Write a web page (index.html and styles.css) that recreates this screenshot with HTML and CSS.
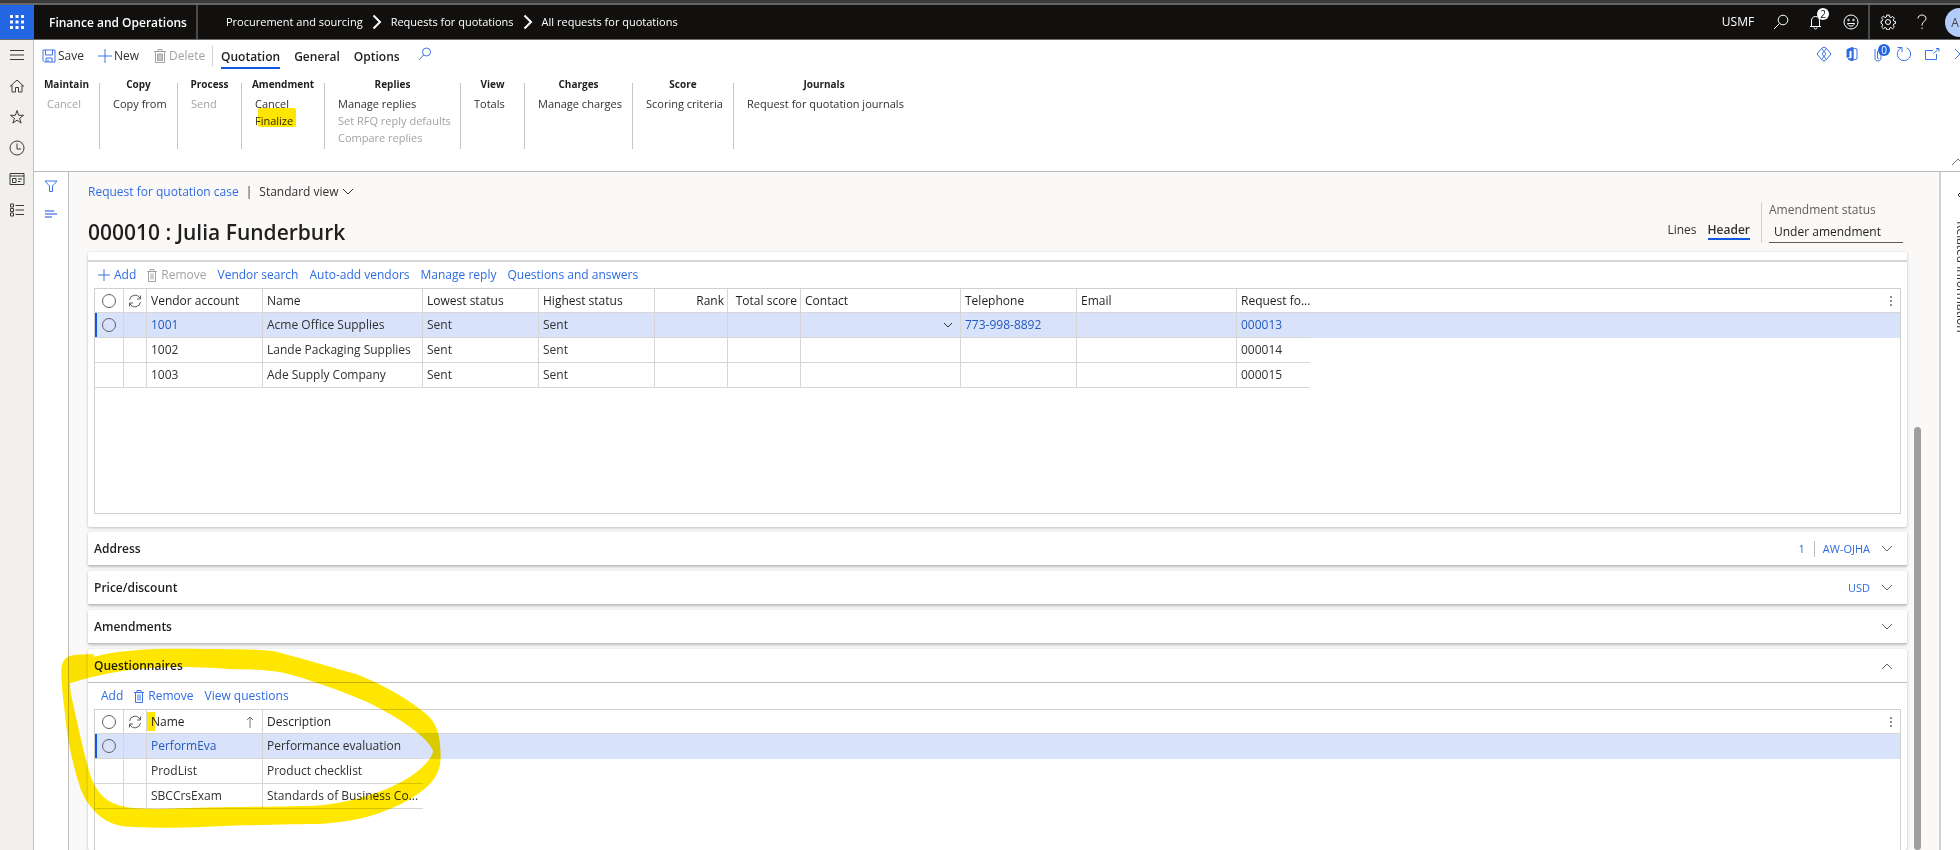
FILE: index.html
```
<!DOCTYPE html>
<html lang="en">
<head>
    <meta charset="utf-8">
    <title>Finance and Operations</title>
    <link rel="stylesheet" href="styles.css">
</head>
<body>
    <header class="topbar">
        <button class="launcher" aria-label="App launcher">
            <svg width="16" height="16" viewBox="0 0 16 16"><path d="M1 1h3v3H1zM6.500 1h3v3h-3zM12 1h3v3h-3zM1 6.500h3v3H1zM6.500 6.500h3v3h-3zM12 6.500h3v3h-3zM1 12h3v3H1zM6.500 12h3v3h-3zM12 12h3v3h-3z"/></svg>
        </button>
        <div class="app-name">Finance and Operations</div>
        <nav class="crumbs">
            <a href="#">Procurement and sourcing</a>
            <svg width="10" height="16" viewBox="0 0 10 16"><path d="M1.500 1.500L8 8l-6.500 6.500"/></svg>
            <a href="#">Requests for quotations</a>
            <svg width="10" height="16" viewBox="0 0 10 16"><path d="M1.500 1.500L8 8l-6.500 6.500"/></svg>
            <a href="#">All requests for quotations</a>
        </nav>
        <div class="top-tools">
            <button class="company">USMF</button>
            <button aria-label="Search"><svg width="16" height="16" viewBox="0 0 16 16"><circle cx="10" cy="6" r="4.800"/><path d="M6.500 9.500L1 15"/></svg></button>
            <button class="bell" aria-label="Notifications"><svg width="16" height="16" viewBox="0 0 16 16"><path d="M2 12.500h11M3.500 12.500V7c0-3 1.500-4.500 4-4.500s4 1.500 4 4.500v5.500M6 13.500c0 2 3 2 3 0"/></svg><span class="count">2</span></button>
            <button aria-label="Feedback"><svg width="16" height="16" viewBox="0 0 16 16"><circle cx="8" cy="8" r="7"/><path d="M4.500 9.500c1 3.500 6 3.500 7 0z"/><circle cx="5.500" cy="6" r=".8"/><circle cx="10.500" cy="6" r=".8"/></svg></button>
            <button class="gear" aria-label="Settings"><svg width="16" height="16" viewBox="0 0 16 16"><circle cx="8" cy="8" r="2.500"/><path d="M6.800 1h2.400l.4 2 1.400.6 1.700-1.200 1.700 1.700-1.200 1.700.6 1.400 1.700.3v2l-1.700.4-.6 1.400 1.200 1.700-1.700 1.700-1.700-1.200-1.400.6-.4 1.700H6.800l-.4-1.700-1.400-.6-1.700 1.200-1.700-1.700 1.200-1.700-.6-1.400L1 9.200v-2l1.200-.3.6-1.400-1.200-1.700 1.700-1.700L5 3.600 6.400 3z"/></svg></button>
            <button class="help" aria-label="Help"><svg width="10" height="16" viewBox="0 0 10 16"><path d="M1 4.500C1 2.500 2.700 1 5 1s4 1.500 4 3.500C9 7.500 5 7.500 5 11v.5"/><path d="M5 13.500V15"/></svg></button>
            <button class="avatar">AD</button>
        </div>
    </header>

    <div class="shell">
        <nav class="rail">
            <a href="#" aria-label="Expand"><svg width="16" height="16" viewBox="0 0 16 16"><path d="M1 3.500h14M1 8h14M1 12.500h14"/></svg></a>
            <a href="#" aria-label="Home"><svg width="16" height="16" viewBox="0 0 16 16"><path d="M1 8.500L8 2l7 6.500M3 7v7h3.500V9.500h3V14H13V7"/></svg></a>
            <a href="#" aria-label="Favorites"><svg width="16" height="16" viewBox="0 0 16 16"><path d="M8 1.500l1.600 4.800h5L10.600 9.300l1.500 4.800L8 11.200l-4.100 2.900 1.500-4.800-4-3h5z"/></svg></a>
            <a href="#" aria-label="Recent"><svg width="16" height="16" viewBox="0 0 16 16"><circle cx="8" cy="8" r="7"/><path d="M8 3.500V9h4"/></svg></a>
            <a href="#" aria-label="Workspaces"><svg width="16" height="16" viewBox="0 0 16 16"><path d="M1 2.500h14v11H1zM1 5h14M3.500 7.500h3.500v4H3.500zM9 8h4M9 10.500h2.500"/></svg></a>
            <a href="#" aria-label="Modules"><svg width="16" height="16" viewBox="0 0 16 16"><path d="M1.500 2h3v3h-3zM1.500 6.500h3v3h-3zM1.500 11h3v3h-3zM6.500 3.500H15M6.500 8H15M6.500 12.500H15"/></svg></a>
        </nav>

        <div class="page">
            <section class="ribbon">
                <div class="tabs">
                    <button class="cmd save"><svg class="blue" width="14" height="14" viewBox="0 0 14 14"><path d="M1 1h12v12H2.500L1 11.500zM3.500 1v5h7V1M4 13V9h6v4M6 10.500V13"/></svg>Save</button>
                    <button class="cmd new"><svg class="blue" width="14" height="14" viewBox="0 0 14 14"><path d="M7 0v14M0 7h14"/></svg>New</button>
                    <button class="cmd delete" disabled><svg width="12" height="14" viewBox="0 0 12 14"><path d="M0 2.500h12M4 2V.5h4V2M1.500 2.500v11h9v-11"/><path d="M3.500 5h5v6.500h-5z" fill="#c8c6c4"/></svg>Delete</button>
                    <button class="tab active">Quotation</button>
                    <button class="tab">General</button>
                    <button class="tab">Options</button>
                    <button class="find" aria-label="Find action"><svg class="blue" width="14" height="14" viewBox="0 0 14 14"><circle cx="8.500" cy="5" r="4"/><path d="M5.500 8L1 13"/></svg></button>
                    <div class="page-tools">
                        <button aria-label="Power Apps"><svg class="blue" width="16" height="16" viewBox="0 0 16 16"><path d="M5.500 2.500L1 8l4.500 5.500L10 8zM10.500 2.500L6 8l4.500 5.500L15 8zM5.500 2.500L8 1l2.500 1.500M5.500 13.500L8 15l2.500-1.500"/></svg></button>
                        <button aria-label="Open in Office"><svg class="blue" width="14" height="16" viewBox="0 0 14 16"><path d="M8 2l4 1v10l-4 1z"/><path d="M7 1.500L2 3.500v8l2-.5V5l3-1v8.500l-4 .5 4 2 1-1V2z" fill="#2266e3"/></svg></button>
                        <button class="clip" aria-label="Attachments"><svg class="blue" width="14" height="16" viewBox="0 0 14 16"><path d="M2 3v9c0 4 6 4 6 0V4M4.500 5v7c0 1 1.500 1 1.500 0"/></svg><span class="count">0</span></button>
                        <button aria-label="Refresh"><svg class="blue" width="16" height="16" viewBox="0 0 16 16"><path d="M10.500 1.800a6.700 6.700 0 1 1-5.500.2M1.500 1.500H6V6"/></svg></button>
                        <button aria-label="Open in new window"><svg class="blue" width="16" height="14" viewBox="0 0 16 14"><path d="M9 3.500H1.500v9h11V7M9.500 6.500L15 1.500M12 1.500h3v3"/></svg></button>
                        <button aria-label="Close"><svg class="blue" width="12" height="12" viewBox="0 0 12 12"><path d="M1 1l10 10M11 1L1 11"/></svg></button>
                    </div>
                </div>
                <div class="groups">
                    <div class="group"><h4>Maintain</h4><div class="items"><button disabled>Cancel</button></div></div>
                    <div class="group"><h4>Copy</h4><div class="items"><button>Copy from</button></div></div>
                    <div class="group"><h4>Process</h4><div class="items"><button disabled>Send</button></div></div>
                    <div class="group"><h4>Amendment</h4><div class="items"><button>Cancel</button><button class="finalize">Finalize</button></div></div>
                    <div class="group"><h4>Replies</h4><div class="items"><button>Manage replies</button><button disabled>Set RFQ reply defaults</button><button disabled>Compare replies</button></div></div>
                    <div class="group"><h4>View</h4><div class="items"><button>Totals</button></div></div>
                    <div class="group"><h4>Charges</h4><div class="items"><button>Manage charges</button></div></div>
                    <div class="group"><h4>Score</h4><div class="items"><button>Scoring criteria</button></div></div>
                    <div class="group"><h4>Journals</h4><div class="items"><button>Request for quotation journals</button></div></div>
                </div>
                <button class="collapse" aria-label="Collapse ribbon"><svg width="14" height="8" viewBox="0 0 14 8"><path d="M1 7l6-6 6 6"/></svg></button>
            </section>

            <div class="work">
                <aside class="filters">
                    <button aria-label="Filter"><svg class="blue" width="14" height="12" viewBox="0 0 14 12"><path d="M1 1h12L8.500 6v5.500h-3V6z"/></svg></button>
                    <button aria-label="Related list"><svg width="12" height="8" viewBox="0 0 12 8"><path d="M0 1h9M0 4h12M0 7h7" stroke="#8ba5ee" stroke-width="2"/></svg></button>
                </aside>

                <main class="content">
                    <div class="view-line">
                        <a href="#">Request for quotation case</a>
                        <span>|</span>
                        <button>Standard view<svg width="12" height="8" viewBox="0 0 12 8"><path d="M1 1l5 5 5-5"/></svg></button>
                    </div>
                    <div class="title-line">
                        <h1>000010 : Julia Funderburk</h1>
                        <div class="modes">
                            <button>Lines</button>
                            <button class="active">Header</button>
                        </div>
                        <div class="status">
                            <label for="status">Amendment status</label>
                            <input id="status" type="text" value="Under amendment" readonly>
                        </div>
                    </div>

                    <div class="scroller">
                        <div class="cards">
                            <section class="card vendors">
                                <div class="card-body">
                                    <div class="toolbar">
                                        <button><svg class="blue" width="12" height="12" viewBox="0 0 12 12"><path d="M6 0v12M0 6h12"/></svg>Add</button>
                                        <button disabled><svg width="10" height="13" viewBox="0 0 10 13"><path d="M0 2.500h10M3 2V.5h4V2M1.500 2.500v10h7v-10M4 4.500v6M6 4.500v6"/></svg>Remove</button>
                                        <button>Vendor search</button>
                                        <button>Auto-add vendors</button>
                                        <button>Manage reply</button>
                                        <button>Questions and answers</button>
                                    </div>
                                    <div class="grid-box">
                                        <table>
                                            <colgroup><col class="c-pick"><col class="c-sync"><col class="c-mid"><col class="c-wide"><col class="c-mid"><col class="c-mid"><col class="c-num"><col class="c-num"><col class="c-wide"><col class="c-mid"><col class="c-wide"><col class="c-num"><col></colgroup>
                                            <thead>
                                                <tr>
                                                    <th><input type="checkbox" aria-label="Select all vendors"></th>
                                                    <th><svg width="14" height="14" viewBox="0 0 14 14"><path d="M1.500 6A5.500 5.500 0 0 1 12 4.500M12.500 8A5.500 5.500 0 0 1 2 9.500M12.500 1.500v3.500H9M1.500 12.500V9H5"/></svg></th>
                                                    <th>Vendor account</th><th>Name</th><th>Lowest status</th><th>Highest status</th><th class="num">Rank</th><th class="num">Total score</th><th>Contact</th><th>Telephone</th><th>Email</th><th>Request fo...</th>
                                                    <th class="more"><button aria-label="Grid options"><svg width="2" height="10" viewBox="0 0 2 10"><path d="M0 1h2M0 5h2M0 9h2"/></svg></button></th>
                                                </tr>
                                            </thead>
                                            <tbody>
                                                <tr class="selected">
                                                    <td><input type="checkbox" aria-label="Select 1001"></td><td></td><td><a href="#">1001</a></td><td>Acme Office Supplies</td><td>Sent</td><td>Sent</td><td></td><td></td>
                                                    <td class="lookup"><button aria-label="Pick contact"><svg width="10" height="6" viewBox="0 0 10 6"><path d="M1 1l4 4 4-4"/></svg></button></td>
                                                    <td><a href="#">773-998-8892</a></td><td></td><td><a href="#">000013</a></td><td></td>
                                                </tr>
                                                <tr><td></td><td></td><td>1002</td><td>Lande Packaging Supplies</td><td>Sent</td><td>Sent</td><td></td><td></td><td></td><td></td><td></td><td>000014</td><td></td></tr>
                                                <tr><td></td><td></td><td>1003</td><td>Ade Supply Company</td><td>Sent</td><td>Sent</td><td></td><td></td><td></td><td></td><td></td><td>000015</td><td></td></tr>
                                            </tbody>
                                        </table>
                                    </div>
                                </div>
                            </section>

                            <section class="card">
                                <div class="card-head">
                                    <h2>Address</h2>
                                    <a class="split" href="#">1</a>
                                    <a href="#">AW-OJHA</a>
                                    <button aria-label="Expand Address"><svg width="12" height="8" viewBox="0 0 12 8"><path d="M1 1l5 5 5-5"/></svg></button>
                                </div>
                            </section>
                            <section class="card">
                                <div class="card-head">
                                    <h2>Price/discount</h2>
                                    <a href="#">USD</a>
                                    <button aria-label="Expand Price/discount"><svg width="12" height="8" viewBox="0 0 12 8"><path d="M1 1l5 5 5-5"/></svg></button>
                                </div>
                            </section>
                            <section class="card">
                                <div class="card-head">
                                    <h2>Amendments</h2>
                                    <button aria-label="Expand Amendments"><svg width="12" height="8" viewBox="0 0 12 8"><path d="M1 1l5 5 5-5"/></svg></button>
                                </div>
                            </section>

                            <section class="card questionnaires">
                                <div class="card-head">
                                    <h2>Questionnaires</h2>
                                    <button aria-label="Collapse Questionnaires"><svg width="12" height="8" viewBox="0 0 12 8"><path d="M1 7l5-5 5 5"/></svg></button>
                                </div>
                                <div class="card-body">
                                    <div class="toolbar">
                                        <button>Add</button>
                                        <button><svg class="blue" width="10" height="13" viewBox="0 0 10 13"><path d="M0 2.500h10M3 2V.5h4V2M1.500 2.500v10h7v-10M4 4.500v6M6 4.500v6"/></svg>Remove</button>
                                        <button>View questions</button>
                                    </div>
                                    <div class="grid-box">
                                        <table>
                                            <colgroup><col class="c-pick"><col class="c-sync"><col class="c-mid"><col class="c-wide"><col></colgroup>
                                            <thead>
                                                <tr>
                                                    <th><input type="checkbox" aria-label="Select all questionnaires"></th>
                                                    <th><svg width="14" height="14" viewBox="0 0 14 14"><path d="M1.500 6A5.500 5.500 0 0 1 12 4.500M12.500 8A5.500 5.500 0 0 1 2 9.500M12.500 1.500v3.500H9M1.500 12.500V9H5"/></svg></th>
                                                    <th class="sorted">Name<svg width="8" height="12" viewBox="0 0 8 12"><path d="M4 12V1M1 4l3-3 3 3"/></svg></th>
                                                    <th>Description</th>
                                                    <th class="more"><button aria-label="Grid options"><svg width="2" height="10" viewBox="0 0 2 10"><path d="M0 1h2M0 5h2M0 9h2"/></svg></button></th>
                                                </tr>
                                            </thead>
                                            <tbody>
                                                <tr class="selected"><td><input type="checkbox" aria-label="Select PerformEva"></td><td></td><td><a href="#">PerformEva</a></td><td>Performance evaluation</td><td></td></tr>
                                                <tr><td></td><td></td><td>ProdList</td><td>Product checklist</td><td></td></tr>
                                                <tr><td></td><td></td><td>SBCCrsExam</td><td>Standards of Business Co...</td><td></td></tr>
                                            </tbody>
                                        </table>
                                    </div>
                                </div>
                                <!-- marker ring around the questionnaires -->
                                <svg class="marker" width="384" height="184" viewBox="60 438 1152 552"><path fill-rule="evenodd" d="M64 510C64 475 80 463 110 461L160 459L163 467C230 448 320 443 420 443C540 444 660 443 710 452C760 465 880 500 950 520C1040 555 1110 600 1150 632C1195 665 1202 710 1202 770C1200 830 1165 860 1110 895C1030 940 950 962 850 968C750 970 600 972 500 977C400 981 300 982 245 975C180 965 140 910 122 865C100 795 84 730 76 650C70 590 64 560 64 510ZM90 547C140 530 240 505 340 500C430 495 520 500 580 505C640 506 680 506 730 515C800 532 900 568 980 602C1060 640 1165 705 1180 752C1165 790 1120 830 1040 864C960 895 880 912 820 914C700 918 500 917 420 922C330 926 260 925 220 907C180 890 160 850 150 820C130 750 115 680 106 640C98 600 90 575 90 547Z"/></svg>
                            </section>
                        </div>
                        <div class="scroll-track"><div class="scroll-thumb"></div></div>
                    </div>
                </main>

                <aside class="related">
                    <button aria-label="Show related information"><svg width="8" height="12" viewBox="0 0 8 12"><path d="M7 1L2 6l5 5"/></svg></button>
                    <span>Related information</span>
                </aside>
            </div>
        </div>
    </div>
</body>
</html>
```

FILE: styles.css
```
*{
    box-sizing: border-box;
}
body{
    margin: 0;
    height: 100vh;
    display: flex;
    flex-direction: column;
    overflow: hidden;
    font-family: "Open Sans", "Noto Sans", sans-serif;
    font-size: 12px;
    line-height: 16px;
    color: #323130;
    background: #fff;
}
button, input{
    font: inherit;
    color: inherit;
    background: none;
    border: 0;
    padding: 0;
    margin: 0;
}
button{
    white-space: nowrap;
}
button:disabled{
    color: #a5a3a1;
}
a{
    color: #2f6be4;
    text-decoration: none;
}
svg{
    display: block;
    flex: none;
    fill: none;
    stroke: currentColor;
}
svg.blue{
    color: #3d73e6;
}
h1, h2, h4{
    margin: 0;
}

/* top bar */
.topbar{
    flex: none;
    display: flex;
    align-items: stretch;
    height: 40px;
    border-top: 3px solid #3b3b3b;
    border-bottom: 1px solid #6b6b6b;
    box-shadow: inset 0 2px #666;
    padding-top: 2px;
    background: #11100f;
    color: #fff;
    overflow: hidden;
}
.launcher{
    width: 34px;
    background: #2266e3;
    display: flex;
    align-items: center;
    justify-content: center;
}
.launcher svg{
    fill: #fff;
    stroke: none;
}
.app-name{
    width: 164px;
    padding-left: 15px;
    border-right: 2px solid #4a4a4a;
    font-weight: 600;
    line-height: 36px;
    white-space: nowrap;
}
.crumbs{
    display: flex;
    align-items: center;
    gap: 9px;
    padding-left: 28px;
    font-size: 11px;
    white-space: nowrap;
}
.crumbs a{
    color: #fff;
}
.crumbs svg{
    stroke-width: 2;
}
.top-tools{
    display: flex;
    align-items: stretch;
    margin-left: auto;
    margin-right: -14px;
}
.top-tools button{
    position: relative;
    display: flex;
    align-items: center;
    justify-content: center;
    width: 35px;
}
.top-tools .company{
    width: 50px;
}
.top-tools .gear{
    width: 38px;
    border-left: 2px solid #4a4a4a;
}
.top-tools .help{
    width: 32px;
}
.top-tools .avatar{
    width: 29px;
    height: 29px;
    margin: 3px 0 0 7px;
    border-radius: 50%;
    background: #b4ccf9;
    color: #444;
}
.count{
    position: absolute;
    top: 3px;
    right: 4px;
    width: 12px;
    height: 12px;
    border-radius: 50%;
    background: #fff;
    color: #11100f;
    font-size: 10px;
    line-height: 12px;
    text-align: center;
}

/* left rail */
.shell{
    flex: 1;
    display: flex;
    min-height: 0;
}
.rail{
    flex: none;
    width: 34px;
    display: flex;
    flex-direction: column;
    align-items: center;
    gap: 15px;
    padding-top: 7px;
    background: #f1f0ef;
    border-right: 1px solid #c4c2c0;
}
.rail a{
    color: #3b3a39;
}
.page{
    flex: 1;
    min-width: 0;
    display: flex;
    flex-direction: column;
}

/* ribbon */
.ribbon{
    flex: none;
    position: relative;
    height: 132px;
    border-bottom: 1px solid #bebcba;
    overflow: hidden;
}
.tabs{
    display: flex;
    align-items: flex-start;
    height: 36px;
    padding: 6px 0 0 8px;
}
.cmd{
    display: flex;
    align-items: center;
    gap: 2px;
    height: 20px;
}
.save{
    width: 56px;
}
.new{
    width: 56px;
}
.delete{
    width: 59px;
    gap: 3px;
    border-right: 1px solid #d2d0ce;
}
.tab{
    height: 23px;
    line-height: 20px;
    margin-left: 14px;
    border-bottom: 2px solid transparent;
    font-weight: 600;
    color: #201f1e;
}
.delete + .tab{
    margin-left: 8px;
}
.tab.active{
    border-bottom-color: #1157df;
}
.find{
    margin: 1px 0 0 18px;
}
.page-tools{
    display: flex;
    gap: 12px;
    margin-left: auto;
    margin-right: -8px;
}
.page-tools button{
    position: relative;
    width: 16px;
    height: 16px;
    display: flex;
    align-items: center;
    justify-content: center;
}
.page-tools .clip{
    margin-right: -4px;
}
.clip .count{
    top: -2px;
    right: -2px;
    background: #2266e3;
    color: #fff;
}
.groups{
    display: grid;
    grid-template-columns: 66px 78px 64px 83px 136px 64px 108px 101px 180px;
    padding-top: 7px;
}
.group{
    height: 66px;
    padding: 0 8px;
    border-right: 1px solid #c8c6c4;
    display: flex;
    flex-direction: column;
    align-items: center;
}
.group:last-child{
    border-right: 0;
}
.group h4{
    margin-top: -7px;
    font-size: 10px;
    line-height: 16px;
    color: #201f1e;
}
.items{
    width: 100%;
    display: flex;
    flex-direction: column;
    align-items: flex-start;
    padding: 3px 0 0 5px;
    font-size: 11px;
}
.items button{
    line-height: 17px;
}
.finalize{
    position: relative;
}
.finalize::after{
    content: "";
    position: absolute;
    left: 3px;
    top: -4px;
    width: 38px;
    height: 19px;
    border-radius: 2px;
    background: #ffe600;
    mix-blend-mode: multiply;
}
.collapse{
    position: absolute;
    right: -5px;
    bottom: 5px;
    color: #777;
}

/* work area */
.work{
    flex: 1;
    min-height: 0;
    display: flex;
}
.filters{
    flex: none;
    width: 35px;
    display: flex;
    flex-direction: column;
    align-items: center;
    gap: 18px;
    padding-top: 8px;
    border-right: 1px solid #bebcba;
}
.content{
    flex: 1;
    min-width: 0;
    display: flex;
    flex-direction: column;
    padding-left: 19px;
    background: #faf9f8;
}
.view-line{
    display: flex;
    align-items: center;
    gap: 7px;
    padding-top: 12px;
}
.view-line button{
    display: flex;
    align-items: center;
    gap: 3px;
}
.title-line{
    flex: none;
    display: flex;
    height: 52px;
    padding-right: 36px;
}
h1{
    flex: 1;
    font-size: 21px;
    font-weight: 600;
    line-height: 32px;
    padding-top: 16px;
    color: #201f1e;
}
.modes{
    display: flex;
    align-items: flex-start;
    gap: 11px;
    padding: 22px 11px 0 0;
}
.modes .active{
    font-weight: 600;
    border-bottom: 2px solid #1157df;
}
.status{
    width: 142px;
    height: 41px;
    margin-top: 2px;
    padding-left: 7px;
    border-left: 1px solid #d2d0ce;
    color: #605e5c;
}
.status label{
    display: block;
}
.status input{
    width: 100%;
    height: 25px;
    padding: 3px 5px 0;
    border-bottom: 1px solid #605e5c;
    color: #201f1e;
}

/* fast tabs */
.scroller{
    flex: 1;
    min-height: 0;
    display: flex;
}
.cards{
    flex: 1;
    min-width: 0;
    display: flex;
    flex-direction: column;
    gap: 5px;
}
.card{
    flex: none;
    background: #fff;
    border-radius: 2px;
    box-shadow: 0 1px 3px #bbb;
}
.card-head{
    flex: none;
    display: flex;
    align-items: center;
    height: 34px;
    padding: 0 14px 0 6px;
    border-bottom: 1px solid #c2c0be;
}
.card-head h2{
    flex: 1;
    font-size: 12px;
    font-weight: 600;
    line-height: 16px;
    color: #201f1e;
}
.card-head a{
    margin-right: 11px;
    font-size: 11px;
}
.card-head .split{
    margin-right: 8px;
    padding-right: 9px;
    border-right: 1px solid #bebcba;
}
.card-head button{
    color: #666;
}
.card-body{
    padding: 0 6px 13px 6px;
}
.vendors{
    padding-top: 8px;
}
.vendors .card-body{
    border-top: 2px solid #d8d6d4;
}
.toolbar{
    flex: none;
    display: flex;
    align-items: center;
    gap: 11px;
    height: 26px;
    padding-left: 4px;
}
.toolbar button{
    display: flex;
    align-items: center;
    gap: 4px;
    color: #2f6be4;
}
.toolbar button:disabled{
    color: #a5a3a1;
}
.vendors .grid-box{
    height: 226px;
}
.questionnaires{
    flex: 1;
    min-height: 0;
    position: relative;
    display: flex;
    flex-direction: column;
}
.questionnaires .card-body{
    flex: 1;
    min-height: 0;
    display: flex;
    flex-direction: column;
    padding-bottom: 0;
}
.questionnaires .grid-box{
    flex: 1;
    border-bottom: 0;
}
.questionnaires .toolbar{
    padding-left: 7px;
}
.marker{
    position: absolute;
    left: -28px;
    top: -2px;
    fill: #ffe600;
    stroke: none;
    mix-blend-mode: multiply;
    pointer-events: none;
}

/* grids */
.grid-box{
    border: 1px solid #d2d0ce;
}
table{
    width: 100%;
    table-layout: fixed;
    border-collapse: separate;
    border-spacing: 0;
}
.c-pick{
    width: 29px;
}
.c-sync{
    width: 23px;
}
.c-num{
    width: 73px;
}
.c-mid{
    width: 116px;
}
.c-wide{
    width: 160px;
}
th, td{
    height: 25px;
    padding: 0 0 0 4px;
    border-right: 1px solid #d8d6d4;
    border-bottom: 1px solid #d8d6d4;
    font-weight: 400;
    text-align: left;
    white-space: nowrap;
}
th{
    height: 24px;
    color: #201f1e;
}
th:nth-last-child(-n+2), td:nth-last-child(-n+2){
    border-right: 0;
}
td:last-child{
    border-bottom: 0;
}
th:nth-child(2){
    color: #605e5c;
}
.num{
    text-align: right;
    padding: 0 3px 0 0;
}
.more button{
    display: block;
    margin-left: auto;
    margin-right: 8px;
}
th input, td input{
    display: block;
    appearance: none;
    width: 14px;
    height: 14px;
    margin-left: 3px;
    border: 1px solid #605e5c;
    border-radius: 50%;
}
.selected td{
    background: #d8e3fb;
}
.selected td:first-child{
    box-shadow: inset 2px 0 #1157df;
}
.selected a{
    color: #2459bd;
}
.lookup button{
    display: block;
    margin-left: auto;
    padding-right: 7px;
}
.sorted{
    position: relative;
}
.sorted svg{
    float: right;
    margin: 2px 8px 0 0;
    color: #777;
}
.sorted::before{
    content: "";
    position: absolute;
    left: 0;
    top: 2px;
    width: 8px;
    height: 19px;
    background: #ffe600;
    mix-blend-mode: multiply;
}

.scroll-track{
    flex: none;
    width: 32px;
    padding: 175px 0 0 7px;
}
.scroll-thumb{
    width: 7px;
    height: 100%;
    border-radius: 4px;
    background: #9f9f9f;
}

/* right panel */
.related{
    flex: none;
    width: 21px;
    padding: 17px 0 0 12px;
    border-left: 2px solid #d2d0ce;
    overflow: hidden;
}
.related button{
    display: block;
    margin-left: 3px;
}
.related span{
    display: block;
    margin-top: 20px;
    writing-mode: vertical-rl;
    font-size: 12px;
    white-space: nowrap;
}
```
